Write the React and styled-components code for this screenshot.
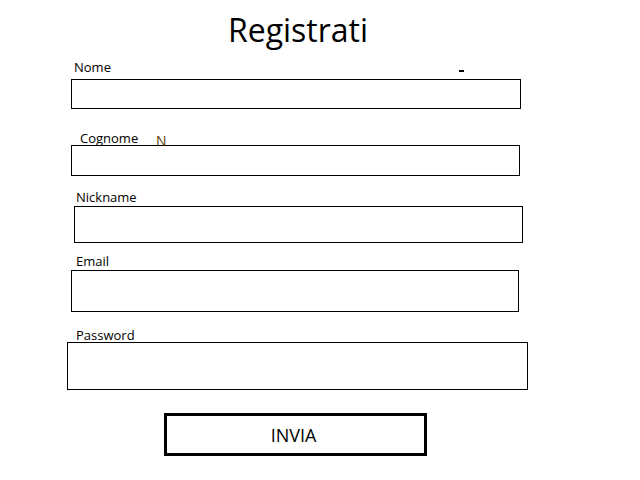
import React from "react";
import styled, { createGlobalStyle } from "styled-components";

const GlobalStyle = createGlobalStyle`
  html, body {
    margin: 0;
    padding: 0;
    background: #ffffff;
  }

  body {
    font-family: "Open Sans", "Noto Sans", sans-serif;
    color: #000000;
  }
`;

const fields = [
  { label: "Nome", labelX: 7, boxX: 4, width: 450, height: 30, gap: 4, top: 9, type: "text" },
  { label: "Cognome", labelX: 13, boxX: 4, width: 449, height: 31, gap: -1, top: 21, type: "text" },
  { label: "Nickname", labelX: 9, boxX: 7, width: 449, height: 37, gap: 1, top: 13, type: "text" },
  { label: "Email", labelX: 9, boxX: 4, width: 448, height: 42, gap: 1, top: 10, type: "email" },
  { label: "Password", labelX: 9, boxX: 0, width: 461, height: 48, gap: -1, top: 15, type: "password" },
];

const App = () => {
  return (
    <>
      <GlobalStyle />
      <Page>
        <Form onSubmit={(e) => e.preventDefault()}>
          <Title>Registrati</Title>
          {fields.map((f, i) => (
            <Field key={f.label} $top={f.top}>
              <Label $x={f.labelX} htmlFor={`field-${i}`}>
                {f.label}
              </Label>
              {i === 0 && <Dash />}
              {i === 1 && <StrayN>N</StrayN>}
              <Box
                id={`field-${i}`}
                type={f.type}
                $x={f.boxX}
                $w={f.width}
                $h={f.height}
                $gap={f.gap}
              />
            </Field>
          ))}
          <SubmitButton type="submit">INVIA</SubmitButton>
        </Form>
      </Page>
    </>
  );
};

export default App;

const Page = styled.div`
  width: 640px;
  height: 480px;
  overflow: hidden;
  background: #ffffff;
`;

const Form = styled.form`
  display: flex;
  flex-direction: column;
  align-items: flex-start;
  width: 461px;
  margin-left: 67px;
  padding-top: 10px;
`;

const Title = styled.h1`
  align-self: stretch;
  margin: 0;
  font-size: 32px;
  font-weight: 400;
  line-height: 40px;
  text-align: center;
  padding-left: 1px;
`;

const Field = styled.div`
  position: relative;
  display: flex;
  flex-direction: column;
  align-items: flex-start;
  margin-top: ${(p) => p.$top}px;
`;

const Label = styled.label`
  display: block;
  margin-left: ${(p) => p.$x}px;
  font-size: 13px;
  line-height: 16px;
  height: 16px;
`;

const Box = styled.input`
  box-sizing: border-box;
  display: block;
  margin: ${(p) => p.$gap}px 0 0 ${(p) => p.$x}px;
  width: ${(p) => p.$w}px;
  height: ${(p) => p.$h}px;
  border: 1px solid #000000;
  border-radius: 0;
  background: #ffffff;
  padding: 0 6px;
  font: inherit;
  outline: none;
`;

const Dash = styled.span`
  position: absolute;
  left: 392px;
  top: 11px;
  width: 5px;
  height: 2px;
  background: #000000;
`;

const StrayN = styled.span`
  position: absolute;
  z-index: 1;
  left: 89px;
  top: 3px;
  font-size: 14px;
  line-height: 16px;
  font-weight: 500;
  color: #5a3a00;
`;

const SubmitButton = styled.button`
  box-sizing: border-box;
  margin: 23px 0 0 97px;
  width: 263px;
  height: 43px;
  border: 3px solid #000000;
  border-radius: 0;
  background: #ffffff;
  font-family: "Open Sans", "Noto Sans", sans-serif;
  font-size: 18px;
  line-height: 20px;
  color: #000000;
  padding: 0 4px 0 0;
  cursor: pointer;
`;
